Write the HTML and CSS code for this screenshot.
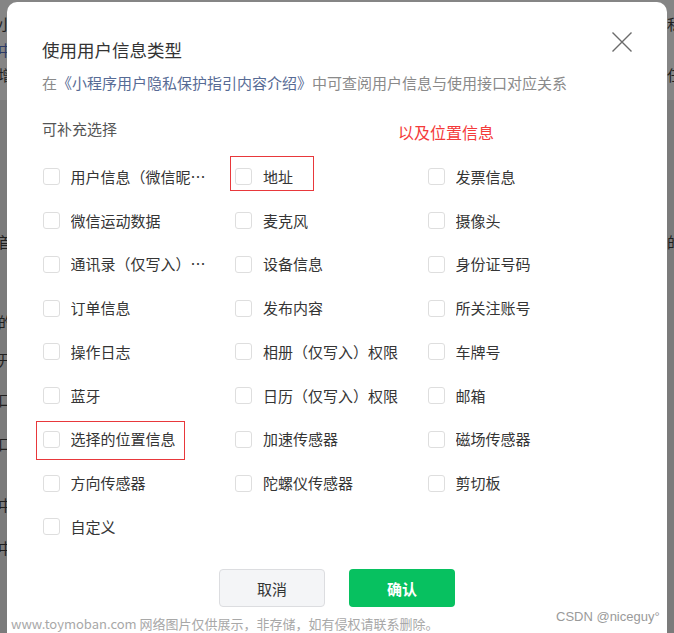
FILE: index.html
```html
<!DOCTYPE html>
<html lang="zh-CN">
<head>
<meta charset="utf-8">
<title>使用用户信息类型</title>
<link rel="stylesheet" href="styles.css">
</head>
<body>
<div class="backdrop">
  <div class="bg-band">
    <div class="bg-row r-a"><span class="bl">小</span><span class="br">私</span></div>
    <div class="bg-row r-b"><span class="bl blue">中</span><span class="br"></span></div>
    <div class="bg-row r-c"><span class="bl">增</span><span class="br">任</span></div>
  </div>
  <div class="bg-row r-d"><span class="bl">首</span><span class="br">的</span></div>
  <div class="bg-row r-e"><span class="bl">的</span><span class="br"></span></div>
  <div class="bg-row r-f"><span class="bl">开</span><span class="br"></span></div>
  <div class="bg-row r-g ruled"><span class="bl">口</span><span class="br"></span></div>
  <div class="bg-row r-h ruled"><span class="bl">口</span><span class="br"></span></div>
  <div class="bg-row r-i"><span class="bl">中</span><span class="br"></span></div>
  <div class="bg-row r-j"><span class="bl">中</span><span class="br"></span></div>
</div>

<div class="dialog">
  <div class="head">
    <div class="title">使用用户信息类型</div>
    <svg class="close" width="20" height="20" viewBox="0 0 20 20"><path d="M0.5 0.5 L19.5 19.5 M19.5 0.5 L0.5 19.5" stroke="#6b6b6b" stroke-width="1.4" fill="none"/></svg>
  </div>
  <div class="desc">在<span class="link">《小程序用户隐私保护指引内容介绍》</span>中可查阅用户信息与使用接口对应关系</div>
  <div class="section">
    <div class="section-label">可补充选择</div>
    <div class="note">以及位置信息</div>
  </div>
  <div class="grid">
    <div class="cell"><span class="box"></span><span class="label">用户信息（微信昵称、头像）</span></div>
    <div class="cell"><span class="box"></span><span class="label">地址</span><span class="mark mark-addr"></span></div>
    <div class="cell"><span class="box"></span><span class="label">发票信息</span></div>
    <div class="cell"><span class="box"></span><span class="label">微信运动数据</span></div>
    <div class="cell"><span class="box"></span><span class="label">麦克风</span></div>
    <div class="cell"><span class="box"></span><span class="label">摄像头</span></div>
    <div class="cell"><span class="box"></span><span class="label">通讯录（仅写入）权限</span></div>
    <div class="cell"><span class="box"></span><span class="label">设备信息</span></div>
    <div class="cell"><span class="box"></span><span class="label">身份证号码</span></div>
    <div class="cell"><span class="box"></span><span class="label">订单信息</span></div>
    <div class="cell"><span class="box"></span><span class="label">发布内容</span></div>
    <div class="cell"><span class="box"></span><span class="label">所关注账号</span></div>
    <div class="cell"><span class="box"></span><span class="label">操作日志</span></div>
    <div class="cell"><span class="box"></span><span class="label">相册（仅写入）权限</span></div>
    <div class="cell"><span class="box"></span><span class="label">车牌号</span></div>
    <div class="cell"><span class="box"></span><span class="label">蓝牙</span></div>
    <div class="cell"><span class="box"></span><span class="label">日历（仅写入）权限</span></div>
    <div class="cell"><span class="box"></span><span class="label">邮箱</span></div>
    <div class="cell"><span class="box"></span><span class="label">选择的位置信息</span><span class="mark mark-loc"></span></div>
    <div class="cell"><span class="box"></span><span class="label">加速传感器</span></div>
    <div class="cell"><span class="box"></span><span class="label">磁场传感器</span></div>
    <div class="cell"><span class="box"></span><span class="label">方向传感器</span></div>
    <div class="cell"><span class="box"></span><span class="label">陀螺仪传感器</span></div>
    <div class="cell"><span class="box"></span><span class="label">剪切板</span></div>
    <div class="cell"><span class="box"></span><span class="label">自定义</span></div>
  </div>
  <div class="actions">
    <button class="btn btn-cancel">取消</button>
    <button class="btn btn-ok">确认</button>
  </div>
</div>

<div class="wm-left">www.toymoban.com 网络图片仅供展示，非存储，如有侵权请联系删除。</div>
<div class="wm-right">CSDN @niceguy°</div>
</body>
</html>
```
FILE: styles.css
```css
* { box-sizing: border-box; }

body {
  margin: 0;
  width: 674px;
  height: 633px;
  overflow: hidden;
  position: relative;
  font-family: "Noto Sans CJK SC", "Noto Sans", sans-serif;
}

/* dimmed page behind the dialog */
.backdrop {
  height: 633px;
  background: #7b7b7b;
  color: #1f1f1f;
  font-size: 15px;
}
.bg-band {
  height: 100px;
  padding-top: 14px;
  background: #858585;
}
.bg-row {
  display: grid;
  grid-template-columns: 667px 7px;
  height: 20px;
  line-height: 20px;
  white-space: nowrap;
}
.bl { margin-left: -2px; }
.br { overflow: visible; }
.blue { color: #2c3a66; }
.r-b { margin-top: 6px; }
.r-c { margin-top: 5px; }
.r-d { margin-top: 132px; }
.r-e { margin-top: 60px; }
.r-f { margin-top: 18px; }
.r-g { margin-top: 20px; }
.r-h { margin-top: 24px; }
.r-i { margin-top: 41px; }
.r-j { margin-top: 23px; }
.ruled { box-shadow: 0 -10px 0 -9px #8e8e8e; }

/* dialog */
.dialog {
  position: absolute;
  left: 7px;
  top: 2px;
  width: 660px;
  height: 660px;
  background: #fff;
  border-radius: 10px;
  padding: 36px 35px 0;
}
.head {
  display: flex;
  justify-content: space-between;
  align-items: flex-start;
}
.title {
  font-size: 17.5px;
  line-height: 24px;
  color: #333;
}
.close {
  display: block;
  margin-top: -6px;
}
.desc {
  margin-top: 10px;
  font-size: 15px;
  line-height: 22px;
  color: #8a8a8a;
  white-space: nowrap;
}
.link { color: #576b95; }

.section {
  display: flex;
  align-items: flex-start;
  margin-top: 24px;
}
.section-label {
  width: 356px;
  font-size: 15px;
  line-height: 22px;
  color: #555;
}
.note {
  margin-top: 2.5px;
  font-size: 16px;
  line-height: 22px;
  color: #f43a3a;
}

.grid {
  margin-top: 12.5px;
  display: grid;
  grid-template-columns: repeat(3, 192.5px);
  grid-auto-rows: 43.76px;
}
.cell {
  position: relative;
  display: flex;
  align-items: center;
  gap: 11px;
  padding-left: 0.5px;
}
.box {
  flex-shrink: 0;
  width: 17px;
  height: 17px;
  border: 1px solid #dedede;
  border-radius: 3px;
  background: #fff;
}
.label {
  max-width: 142px;
  font-size: 15px;
  line-height: 22px;
  color: #353535;
  white-space: nowrap;
  overflow: hidden;
  text-overflow: ellipsis;
}

/* red annotation boxes drawn over the options */
.mark {
  position: absolute;
  border: 1px solid #e8383b;
  pointer-events: none;
}
.mark-addr {
  left: -4.5px;
  top: 1.2px;
  width: 84px;
  height: 35px;
}
.mark-loc {
  left: -6.5px;
  top: 3.6px;
  width: 149px;
  height: 38.5px;
}

.actions {
  margin-top: 20.3px;
  display: flex;
  justify-content: center;
  gap: 24px;
}
.btn {
  width: 106px;
  height: 38px;
  border-radius: 4px;
  font-family: "Noto Sans CJK SC", sans-serif;
  font-size: 15px;
  padding: 0;
}
.btn-cancel {
  background: #f4f5f7;
  border: 1px solid #dcdde0;
  color: #333;
}
.btn-ok {
  background: #07c160;
  border: none;
  color: #fff;
  font-weight: 700;
}

/* watermarks overlaid on the screenshot */
.wm-left {
  position: absolute;
  left: 11px;
  top: 615px;
  font-size: 13px;
  line-height: 18px;
  color: #a8a8a8;
  white-space: nowrap;
}
.wm-right {
  position: absolute;
  left: 556px;
  top: 608px;
  font-family: "Liberation Sans", sans-serif;
  font-size: 13px;
  line-height: 18px;
  color: #9a9a9a;
  white-space: nowrap;
}
```
